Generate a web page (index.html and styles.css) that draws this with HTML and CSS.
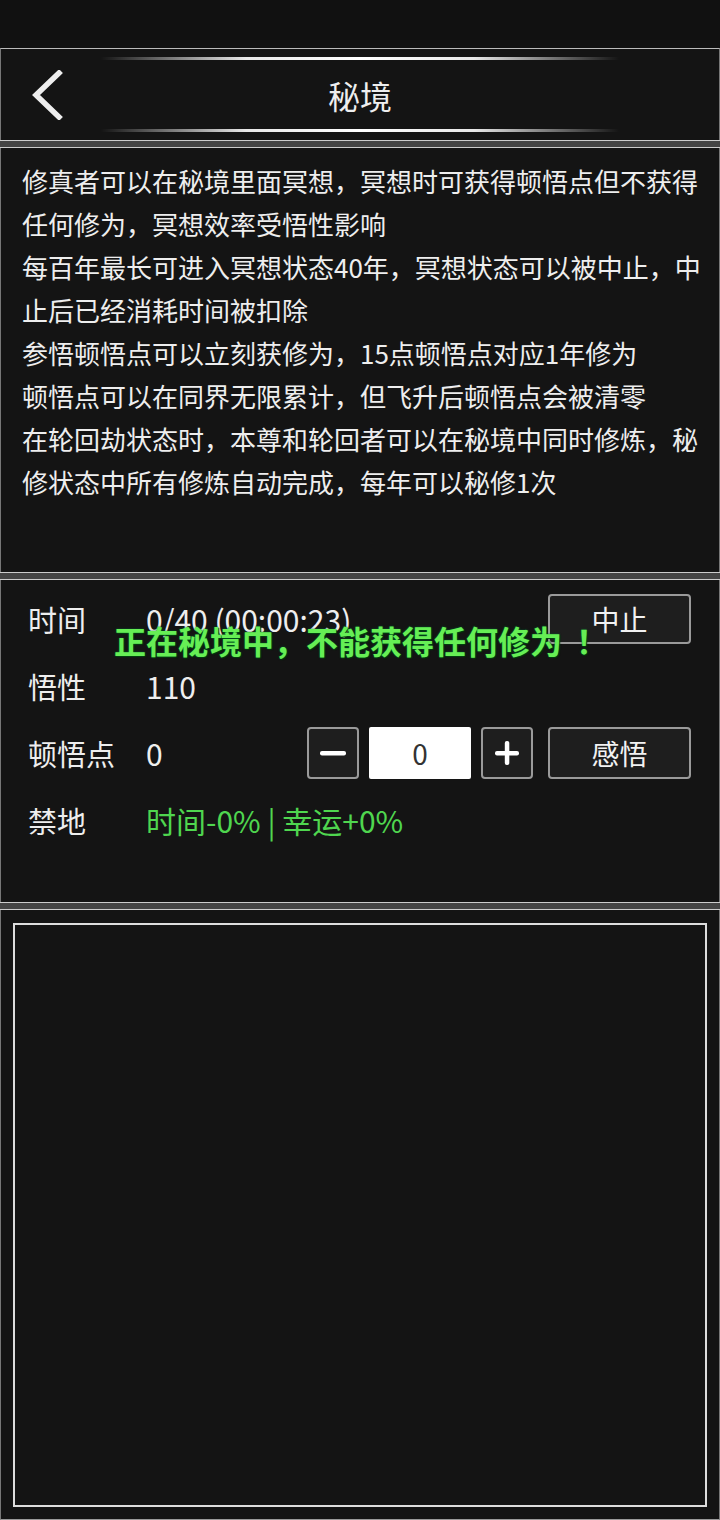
FILE: index.html
```html
<!DOCTYPE html>
<html lang="zh-CN">
<head>
  <meta charset="UTF-8">
  <meta name="viewport" content="width=device-width, initial-scale=1.0">
  <title>秘境</title>
  <link rel="stylesheet" href="styles.css">
</head>
<body>
  <div class="statusbar"></div>

  <div class="header">
    <div class="back">
      <svg width="36" height="50" viewBox="0 0 36 50">
        <polyline points="30,3 7,25 30,47" fill="none" stroke="#eee" stroke-width="5.5" stroke-linecap="square"/>
      </svg>
    </div>
    <div class="title-wrap">
      <div class="glow-line"></div>
      <div class="title">秘境</div>
      <div class="glow-line"></div>
    </div>
    <div></div>
  </div>

  <div class="sep"></div>

  <div class="panel info">
    <p>修真者可以在秘境里面冥想，冥想时可获得顿悟点但不获得任何修为，冥想效率受悟性影响</p>
    <p>每百年最长可进入冥想状态40年，冥想状态可以被中止，中止后已经消耗时间被扣除</p>
    <p>参悟顿悟点可以立刻获修为，15点顿悟点对应1年修为</p>
    <p>顿悟点可以在同界无限累计，但飞升后顿悟点会被清零</p>
    <p>在轮回劫状态时，本尊和轮回者可以在秘境中同时修炼，秘修状态中所有修炼自动完成，每年可以秘修1次</p>
  </div>

  <div class="sep"></div>

  <div class="panel stats">
    <div class="row">
      <span class="label">时间</span>
      <span class="value">0/40 (00:00:23)</span>
      <div class="controls">
        <button class="btn">中止</button>
      </div>
    </div>
    <div class="row">
      <span class="label">悟性</span>
      <span class="value">110</span>
    </div>
    <div class="row">
      <span class="label">顿悟点</span>
      <span class="value">0</span>
      <div class="controls">
        <button class="btn small">
          <svg width="34" height="34" viewBox="0 0 34 34"><rect x="4" y="15" width="26" height="4.5" rx="2" fill="#fff"/></svg>
        </button>
        <div class="num">0</div>
        <button class="btn small">
          <svg width="34" height="34" viewBox="0 0 34 34"><rect x="5" y="15" width="24" height="4.5" rx="2" fill="#fff"/><rect x="14.8" y="5" width="4.5" height="24" rx="2" fill="#fff"/></svg>
        </button>
        <button class="btn gap">感悟</button>
      </div>
    </div>
    <div class="row">
      <span class="label">禁地</span>
      <span class="value green">时间-0% | 幸运+0%</span>
    </div>

    <div class="toast">正在秘境中，不能获得任何修为<span class="bang">！</span></div>
  </div>

  <div class="sep"></div>

  <div class="panel bottom">
    <div class="inner-box"></div>
  </div>
</body>
</html>
```

FILE: styles.css
```css
body {
  margin: 0;
  background: #111;
  color: #eee;
  font-family: "Noto Sans CJK SC", "Noto Sans", sans-serif;
  width: 720px;
  height: 1520px;
  overflow: hidden;
}
.statusbar {
  height: 48px;
  background: #111;
}
.header {
  display: grid;
  grid-template-columns: 100px 1fr 100px;
  height: 91px;
  background: #141414;
  border-top: 1px solid #bbb;
  border-left: 1px solid #777;
  border-right: 1px solid #777;
}
.back {
  display: flex;
  align-items: center;
  padding-left: 28px;
}
.title-wrap {
  display: flex;
  flex-direction: column;
  padding: 8px 0;
}
.glow-line {
  height: 3px;
  background: linear-gradient(to right, rgba(255,255,255,0), rgba(255,255,255,0.9) 28%, #fff 50%, rgba(255,255,255,0.9) 72%, rgba(255,255,255,0));
}
.title {
  flex: 1;
  display: flex;
  align-items: center;
  justify-content: center;
  font-size: 32px;
  color: #eee;
}
.sep {
  height: 6px;
  background: #444;
  border-top: 1px solid #ccc;
  border-bottom: 1px solid #ccc;
}
.panel {
  background: #141414;
  border-left: 1px solid #777;
  border-right: 1px solid #777;
}
.info {
  height: 424px;
  box-sizing: border-box;
  padding: 11px 14px 0 21px;
  font-size: 26px;
  line-height: 43px;
  color: #eee;
}
.info p {
  margin: 0;
}
.stats {
  position: relative;
  height: 322px;
  box-sizing: border-box;
  padding: 13px 28px 0 27px;
  display: flex;
  flex-direction: column;
  gap: 15px;
  font-size: 29px;
}
.row {
  display: flex;
  align-items: center;
  height: 52px;
}
.label {
  width: 118px;
  color: #eee;
}
.value {
  color: #eee;
  font-size: 30px;
}
.green {
  color: #4fd64f;
}
.controls {
  margin-left: auto;
  display: flex;
  align-items: center;
  gap: 10px;
}
.btn {
  width: 143px;
  height: 50px;
  box-sizing: border-box;
  background: #1e1e1e;
  border: 2px solid #9a9a9a;
  border-radius: 4px;
  color: #f2f2f2;
  font-family: inherit;
  font-size: 28px;
  display: flex;
  align-items: center;
  justify-content: center;
  padding: 0;
}
.btn.small {
  width: 52px;
  height: 52px;
}
.btn.gap {
  margin-left: 5px;
  height: 52px;
}
.num {
  width: 102px;
  height: 52px;
  background: #fff;
  border-radius: 2px;
  color: #333;
  font-size: 28px;
  display: flex;
  align-items: center;
  justify-content: center;
}
.toast {
  position: absolute;
  left: 0;
  right: 0;
  top: 37px;
  text-align: center;
  font-size: 32px;
  font-weight: bold;
  color: #66ee55;
  text-shadow: 0 0 2px #063, 1px 1px 1px #030;
}
.bang {
  display: inline-block;
  width: 30px;
  padding-left: 14px;
  text-align: center;
}
.bottom {
  height: 610px;
  box-sizing: border-box;
  padding: 13px 12px 12px 12px;
  border-bottom: 1px solid #999;
}
.inner-box {
  height: 100%;
  box-sizing: border-box;
  border: 2px solid #ddd;
}
```
